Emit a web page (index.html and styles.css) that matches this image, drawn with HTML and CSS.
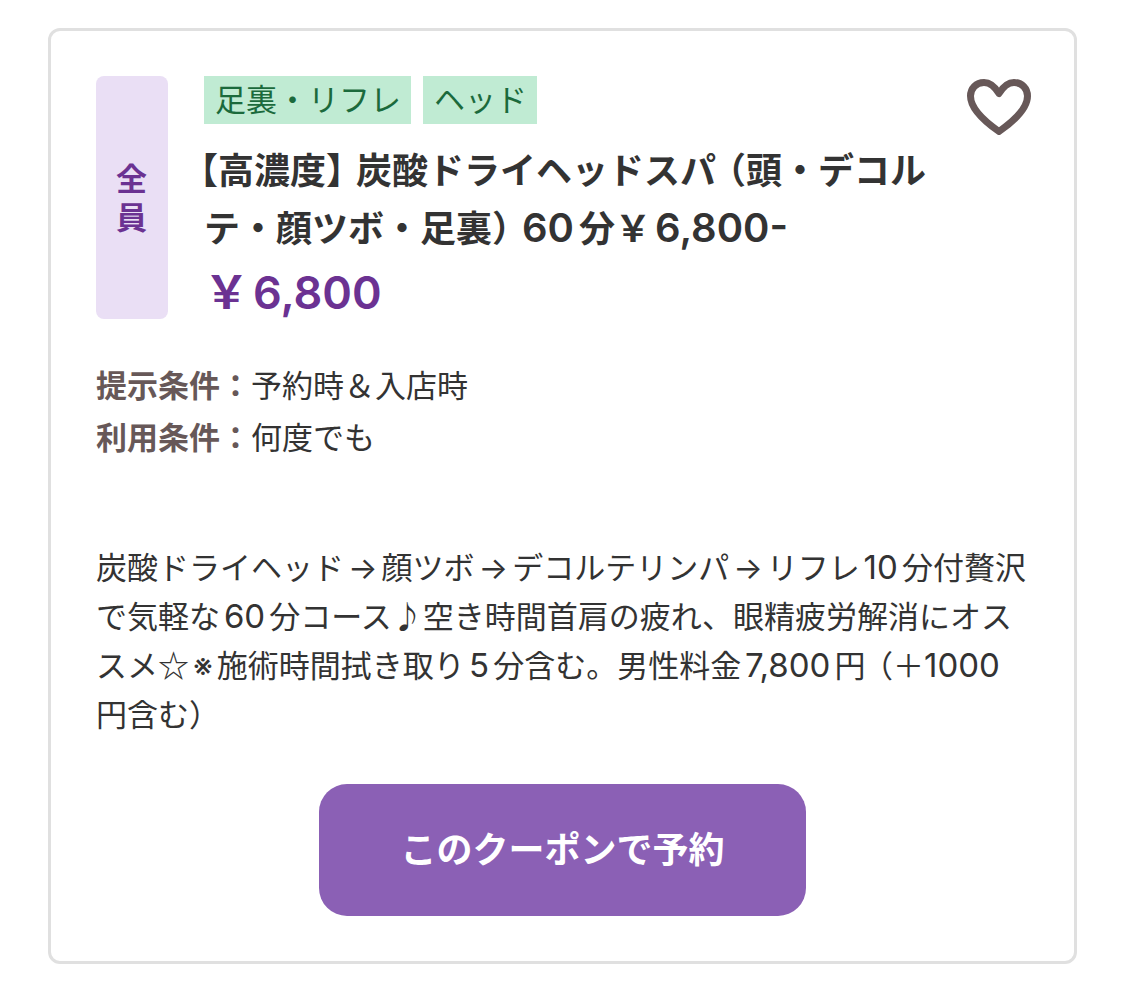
FILE: index.html
```html
<!DOCTYPE html>
<html lang="ja">
<head>
    <meta charset="UTF-8">
    <meta name="viewport" content="width=device-width, initial-scale=1.0">
    <title>クーポン</title>
    <link rel="stylesheet" href="styles.css">
</head>
<body>
    <article class="coupon">
        <div class="coupon-head">
            <div class="target">全員</div>

            <div class="summary">
                <ul class="tags">
                    <li class="tag">足裏・リフレ</li>
                    <li class="tag">ヘッド</li>
                </ul>
                <h2 class="title"><span class="half">【</span>高濃度<span class="half close">】</span>炭酸ドライヘッドスパ<span class="half open">（</span>頭・デコルテ・顔ツボ・足裏<span class="half close">）</span><span class="num">60</span>分<span class="yen">￥</span><span class="num">6,800-</span></h2>
                <p class="price"><span class="yen">￥</span>6,800</p>
            </div>

            <button type="button" class="favorite" aria-label="お気に入り">
                <svg viewBox="0 0 64 56" width="64" height="56">
                    <path d="M32 14.500C28 8 23 3.500 17 3.500C9 3.500 3.500 9.500 3.500 17C3.500 30 17 42 32 52.500C47 42 60.500 30 60.500 17C60.500 9.500 55 3.500 47 3.500C41 3.500 36 8 32 14.500Z"/>
                </svg>
            </button>
        </div>

        <dl class="conditions">
            <div class="condition">
                <dt>提示条件：</dt>
                <dd>予約時＆入店時</dd>
            </div>
            <div class="condition">
                <dt>利用条件：</dt>
                <dd>何度でも</dd>
            </div>
        </dl>

        <p class="description">炭酸ドライヘッド<span class="symbol">→</span>顔ツボ<span class="symbol">→</span>デコルテリンパ<span class="symbol">→</span>リフレ<span class="num">10</span>分付贅沢で気軽な<span class="num">60</span>分コース♪空き時間首肩の疲れ、眼精疲労解消にオススメ<span class="star">☆</span><span class="symbol">※</span>施術時間拭き取り<span class="num">5</span>分含む。男性料金<span class="num">7,800</span>円<span class="half open">（</span>＋<span class="num">1000</span><br>円含む<span class="half">）</span></p>

        <button type="button" class="reserve-btn">このクーポンで予約</button>
    </article>
</body>
</html>
```
FILE: styles.css
```css
body {
    margin: 0;
    padding: 28px 47px 30px 48px;
    background-color: #fff;
    color: #333;
    font-family: Inter, 'Noto Sans CJK JP', sans-serif;
    font-size: 31px;
    text-autospace: normal;
}

.coupon {
    padding: 45px;
    border: 3px solid #e0e0e0;
    border-radius: 12px;
}

.coupon-head {
    display: flex;
    align-items: stretch;
}

.target {
    display: flex;
    align-items: center;
    justify-content: center;
    flex: none;
    box-sizing: border-box;
    width: 72px;
    padding: 0 20px;
    margin-right: 36px;
    border-radius: 8px;
    background-color: #eadff5;
    color: #6b3292;
    font-size: 31px;
    font-weight: 600;
    line-height: 39px;
}

.summary {
    flex: 1;
}

.tags {
    display: flex;
    gap: 12px;
    margin: 0 0 18px;
    padding: 0;
    list-style: none;
}

.tag {
    padding: 0 10px 0 11px;
    background-color: #c0ebd3;
    color: #1b6a3c;
    line-height: 48px;
}

.title {
    margin: 0;
    font-size: 36px;
    font-weight: 600;
    line-height: 58px;
    text-indent: -4px;
}

.title .num {
    font-size: 40px;
    line-height: 1;
}

/* full-width brackets set on half an em */
.half {
    font-feature-settings: "halt";
}

.half.open {
    margin-left: 12px;
}

.half.close {
    margin-right: 12px;
}

.yen {
    margin-right: 4px;
}

.price {
    margin: 0;
    padding-top: 8px;
    color: #6b3292;
    font-size: 45px;
    font-weight: 600;
    line-height: 53px;
}

.favorite {
    align-self: flex-start;
    flex: none;
    margin-right: -2px;
    padding: 3px 0 0;
    border: none;
    background: none;
    cursor: pointer;
}

.favorite svg {
    display: block;
    fill: none;
    stroke: #675858;
    stroke-width: 7;
    stroke-linejoin: round;
}

.conditions {
    margin: 41px 0 79px;
    line-height: 52px;
}

.condition {
    display: flex;
}

.condition dt {
    color: #675858;
    font-weight: 600;
}

.condition dd {
    margin: 0;
}

.description {
    margin: 0 0 45px;
    line-height: 49px;
}

.description .num {
    font-size: 33px;
    line-height: 1;
}

.symbol {
    margin: 0 4px;
}

.star {
    font-family: 'Noto Sans CJK JP', sans-serif;
    line-height: 1;
}

.reserve-btn {
    display: block;
    margin: 0 auto;
    padding: 40px 81px;
    border: none;
    border-radius: 28px;
    background-color: #8b60b5;
    color: #fff;
    font-family: inherit;
    font-size: 36px;
    font-weight: 600;
    line-height: 52px;
    cursor: pointer;
}
```
